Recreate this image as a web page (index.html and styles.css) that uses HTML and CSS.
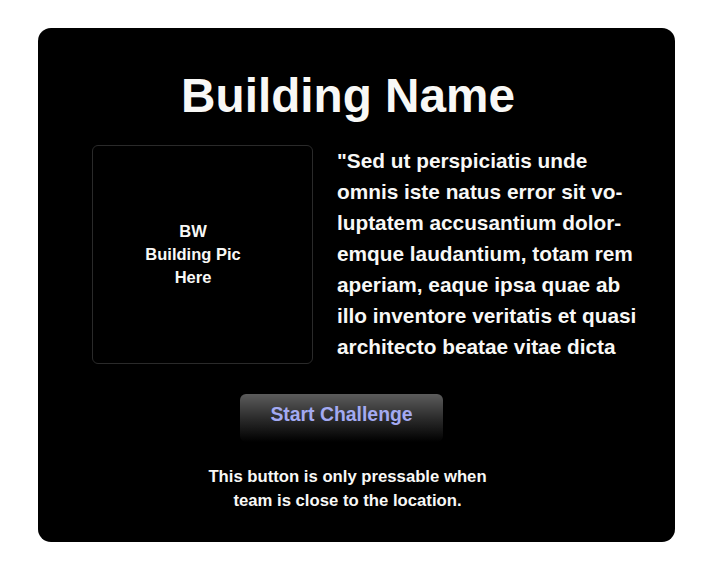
FILE: index.html
```html
<!DOCTYPE html>
<html>
<head>
<meta charset="utf-8">
<link rel="stylesheet" href="styles.css">
</head>
<body>
<div class="card">
  <h1 class="title">Building Name</h1>
  <div class="row">
    <div class="pic">BW<br>Building Pic<br>Here</div>
    <p class="quote">"Sed ut perspiciatis unde<br>omnis iste natus error sit vo-<br>luptatem accusantium dolor-<br>emque laudantium, totam rem<br>aperiam, eaque ipsa quae ab<br>illo inventore veritatis et quasi<br>architecto beatae vitae dicta</p>
  </div>
  <button class="start">Start Challenge</button>
  <p class="note">This button is only pressable when<br>team is close to the location.</p>
</div>
</body>
</html>
```
FILE: styles.css
```css
html, body {
  margin: 0;
  padding: 0;
  background: #ffffff;
}
body {
  font-family: "Liberation Sans", Arial, sans-serif;
}
.card {
  box-sizing: border-box;
  margin: 28px 0 0 38px;
  width: 637px;
  height: 514px;
  background: #000000;
  border-radius: 13px;
  padding-top: 44px;
  display: flex;
  flex-direction: column;
  align-items: center;
  color: #f8f8f6;
}
.title {
  margin: 0 17px 0 0;
  font-size: 47.7px;
  line-height: 47px;
  font-weight: bold;
}
.row {
  align-self: flex-start;
  display: flex;
  gap: 24px;
  margin: 26px 0 0 54px;
}
.pic {
  box-sizing: border-box;
  width: 221px;
  height: 219px;
  padding-right: 19px;
  border: 1px solid #2a2a2a;
  border-radius: 6px;
  display: flex;
  align-items: center;
  justify-content: center;
  text-align: center;
  font-size: 16.5px;
  line-height: 23px;
  font-weight: bold;
}
.quote {
  margin: 0;
  font-size: 20.8px;
  line-height: 31px;
  font-weight: bold;
  white-space: nowrap;
}
.start {
  margin: 30px 30px 0 0;
  box-sizing: border-box;
  width: 203px;
  height: 48px;
  padding: 8px 0 16px;
  border: none;
  border-radius: 6px;
  background: linear-gradient(to bottom, #5c5c5c 0%, #2c2c2c 50%, #000000 100%);
  color: #a3aaf2;
  font-family: "Liberation Sans", Arial, sans-serif;
  font-size: 19.4px;
  line-height: 24px;
  font-weight: bold;
}
.note {
  margin: 23px 18px 0 0;
  text-align: center;
  font-size: 16.7px;
  line-height: 23.5px;
  font-weight: bold;
}
```
